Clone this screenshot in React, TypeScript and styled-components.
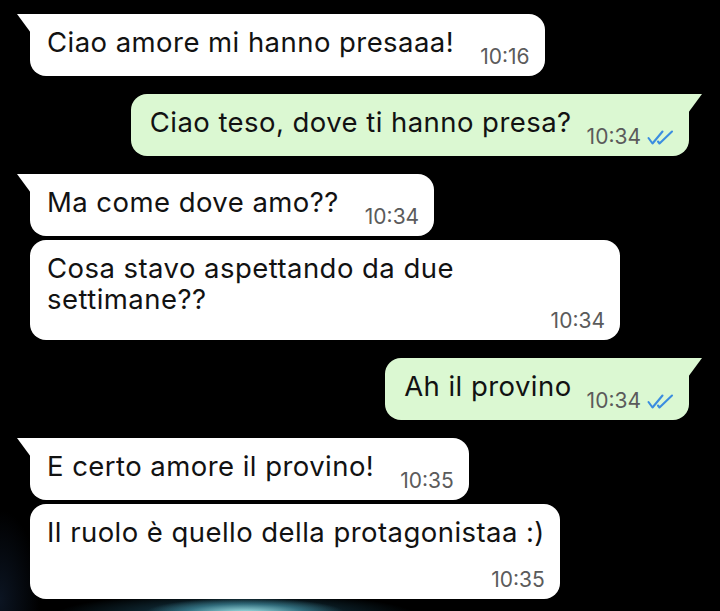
import React from "react";
import styled, { createGlobalStyle, css } from "styled-components";

const Global = createGlobalStyle`
  html, body { margin: 0; padding: 0; background: #000; }
  body { font-family: Inter, "Noto Sans", sans-serif; }
`;

const Screen = styled.div`
  width: 720px;
  height: 611px;
  overflow: hidden;
  box-sizing: border-box;
  padding-top: 14px;
  display: flex;
  flex-direction: column;
  gap: 18px;
  background:
    radial-gradient(ellipse 100px 15px at 245px 613px, rgba(175, 240, 240, 0.95), rgba(80, 170, 190, 0.5) 60%, transparent 100%),
    radial-gradient(ellipse 180px 22px at 235px 615px, rgba(40, 110, 140, 0.7), transparent 100%),
    radial-gradient(ellipse 40px 90px at 0px 600px, rgba(25, 45, 75, 0.45), transparent 100%),
    #000;
`;

const Group = styled.div<{ $out?: boolean }>`
  display: flex;
  flex-direction: column;
  gap: 4px;
  align-items: ${(p) => (p.$out ? "flex-end" : "flex-start")};
  padding: ${(p) => (p.$out ? "0 31px 0 0" : "0 0 0 30px")};
`;

const Bubble = styled.div<{ $out?: boolean; $tail?: boolean; $stacked?: boolean }>`
  position: relative;
  box-sizing: border-box;
  max-width: 590px;
  min-height: 62px;
  padding: 13px 15px 8px ${(p) => (p.$out ? "19px" : "17px")};
  border-radius: 16px;
  background: ${(p) => (p.$out ? "#dbf8d2" : "#ffffff")};
  color: #121212;
  display: flex;
  flex-direction: ${(p) => (p.$stacked ? "column" : "row")};
  align-items: flex-end;
  ${(p) =>
    p.$tail &&
    (p.$out
      ? css`
          border-top-right-radius: 0;
          &::before {
            content: "";
            position: absolute;
            top: 0;
            right: -13px;
            width: 14px;
            height: 19px;
            background: #dbf8d2;
            clip-path: polygon(0 0, 100% 0, 0 100%);
          }
        `
      : css`
          border-top-left-radius: 0;
          &::before {
            content: "";
            position: absolute;
            top: 0;
            left: -13px;
            width: 14px;
            height: 19px;
            background: #ffffff;
            clip-path: polygon(0 0, 100% 0, 100% 100%);
          }
        `)}
`;

const Text = styled.div`
  font-size: 27.5px;
  line-height: 31px;
  letter-spacing: 0.45px;
  align-self: flex-start;
`;

const Meta = styled.div<{ $shift?: number; $out?: boolean }>`
  display: flex;
  align-items: center;
  gap: 6px;
  margin-left: ${(p) => (p.$out ? 15 : 26)}px;
  margin-top: ${(p) => p.$shift ?? 0}px;
  font-size: 21px;
  line-height: 22px;
  color: #5b5b5b;
  white-space: nowrap;
`;

const Ticks = () => (
  <svg width="27" height="15" viewBox="0 0 27 15" fill="none" stroke="#3b8de0" strokeWidth="2.1" strokeLinecap="round" strokeLinejoin="round">
    <path d="M1.5 8 L5.5 13.5 L15.5 1.5" />
    <path d="M11 11.5 L12.5 13.5 L25 1.5" />
  </svg>
);

type Msg = { text: React.ReactNode; time: string; tail?: boolean; stacked?: boolean; shift?: number };

const Message = ({ m, out }: { m: Msg; out?: boolean }) => (
  <Bubble $out={out} $tail={m.tail} $stacked={m.stacked}>
    <Text>{m.text}</Text>
    <Meta $shift={m.shift} $out={out}>
      <span>{m.time}</span>
      {out && <Ticks />}
    </Meta>
  </Bubble>
);

const groups: { out?: boolean; msgs: Msg[] }[] = [
  { msgs: [{ text: "Ciao amore mi hanno presaaa!", time: "10:16", tail: true }] },
  { out: true, msgs: [{ text: "Ciao teso, dove ti hanno presa?", time: "10:34", tail: true }] },
  {
    msgs: [
      { text: "Ma come dove amo??", time: "10:34", tail: true },
      { text: "Cosa stavo aspettando da due settimane??", time: "10:34", stacked: true, shift: -5 },
    ],
  },
  { out: true, msgs: [{ text: "Ah il provino", time: "10:34", tail: true }] },
  {
    msgs: [
      { text: "E certo amore il provino!", time: "10:35", tail: true },
      { text: "Il ruolo è quello della protagonistaa :)", time: "10:35", stacked: true, shift: 21 },
    ],
  },
];

export default function App() {
  return (
    <>
      <Global />
      <Screen>
        {groups.map((g, i) => (
          <Group key={i} $out={g.out}>
            {g.msgs.map((m, j) => (
              <Message key={j} m={m} out={g.out} />
            ))}
          </Group>
        ))}
      </Screen>
    </>
  );
}
